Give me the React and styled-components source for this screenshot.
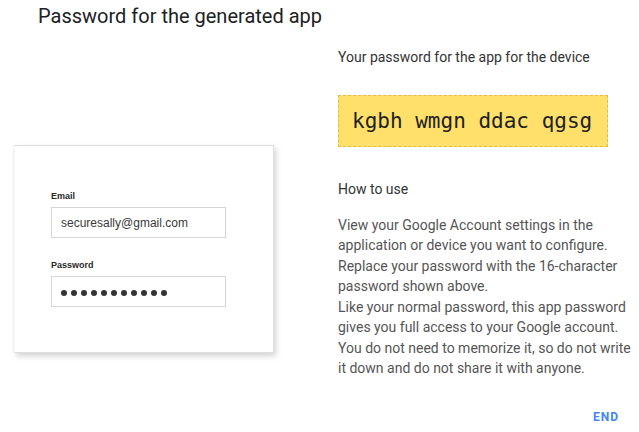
import React from "react"
import styled, { createGlobalStyle } from "styled-components"

const Global = createGlobalStyle`
  html, body {
    margin: 0;
    padding: 0;
    background: #ffffff;
  }
  body {
    font-family: Roboto, "Liberation Sans", sans-serif;
  }
`

export default function App() {
  const dots = Array.from({ length: 11 })

  return (
    <Page>
      <Global />
      <LeftColumn>
        <Title>Password for the generated app</Title>
        <Card>
          <Label>Email</Label>
          <Field>securesally@gmail.com</Field>
          <Label $spaced>Password</Label>
          <Field>
            <Dots>
              {dots.map((_, i) => <Dot key={i} />)}
            </Dots>
          </Field>
        </Card>
      </LeftColumn>

      <RightColumn>
        <Heading>Your password for the app for the device</Heading>
        <Code>kgbh wmgn ddac qgsg</Code>
        <Heading $section>How to use</Heading>
        <Text>
          <p>View your Google Account settings in the application or device you want to configure.</p>
          <p>Replace your password with the 16-character password shown above.</p>
          <p>Like your normal password, this app password gives you full access to your Google account. You do not need to memorize it, so do not write it down and do not share it with anyone.</p>
        </Text>
        <Footer>
          <EndButton>END</EndButton>
        </Footer>
      </RightColumn>
    </Page>
  )
}

const Page = styled.div`
  width: 639px;
  height: 432px;
  display: flex;
  overflow: hidden;
  background: #ffffff;
`

const LeftColumn = styled.div`
  width: 338px;
  flex-shrink: 0;
  display: flex;
  flex-direction: column;
`

const Title = styled.h1`
  margin: 4px 0 0 38px;
  font-family: Roboto, sans-serif;
  font-weight: 400;
  font-size: 20px;
  line-height: 24px;
  color: #202124;
`

const Card = styled.div`
  margin: 117px 0 0 14px;
  width: 222px;
  height: 162px;
  padding: 44px 0 0 36px;
  background: #ffffff;
  border: 1px solid #dedede;
  border-left-color: #f4f4f4;
  box-shadow: 2px 3px 6px rgba(0, 0, 0, 0.18);
`

const Label = styled.div`
  font-family: "Liberation Sans", Arial, sans-serif;
  font-weight: 700;
  font-size: 9px;
  line-height: 12px;
  color: #2a2a2a;
  margin-top: ${p => (p.$spaced ? "21px" : "0")};
  margin-bottom: 5px;
`

const Field = styled.div`
  box-sizing: border-box;
  width: 175px;
  height: 31px;
  padding-left: 9px;
  display: flex;
  align-items: center;
  border: 1px solid #d6d6d6;
  font-family: "Liberation Sans", Arial, sans-serif;
  font-size: 12px;
  color: #3a3a3a;
`

const Dots = styled.div`
  display: flex;
  gap: 4px;
  padding-top: 2px;
`

const Dot = styled.span`
  width: 6px;
  height: 6px;
  border-radius: 50%;
  background: #333;
`

const RightColumn = styled.div`
  flex: 1;
  display: flex;
  flex-direction: column;
  padding-top: 47px;
`

const Heading = styled.div`
  font-size: 14px;
  line-height: 20.5px;
  color: #333;
  margin-top: ${p => (p.$section ? "32px" : "0")};
`

const Code = styled.div`
  box-sizing: border-box;
  margin-top: 27px;
  width: 270px;
  height: 52px;
  padding-left: 13px;
  display: flex;
  align-items: center;
  background: #fee06b;
  border: 1px dashed #e0bd48;
  font-family: "DejaVu Sans Mono", "Liberation Mono", monospace;
  font-size: 21px;
  color: #222;
`

const Text = styled.div`
  margin-top: 15.5px;
  width: 298px;
  font-size: 14px;
  line-height: 20.5px;
  color: #555;

  p {
    margin: 0;
  }
`

const Footer = styled.div`
  display: flex;
  justify-content: flex-end;
  margin-top: 30px;
  padding-right: 20px;
`

const EndButton = styled.button`
  border: none;
  background: none;
  padding: 0;
  font-family: Roboto, sans-serif;
  font-weight: 700;
  font-size: 12px;
  line-height: 16px;
  letter-spacing: 1px;
  color: #4285f4;
  cursor: pointer;
`
